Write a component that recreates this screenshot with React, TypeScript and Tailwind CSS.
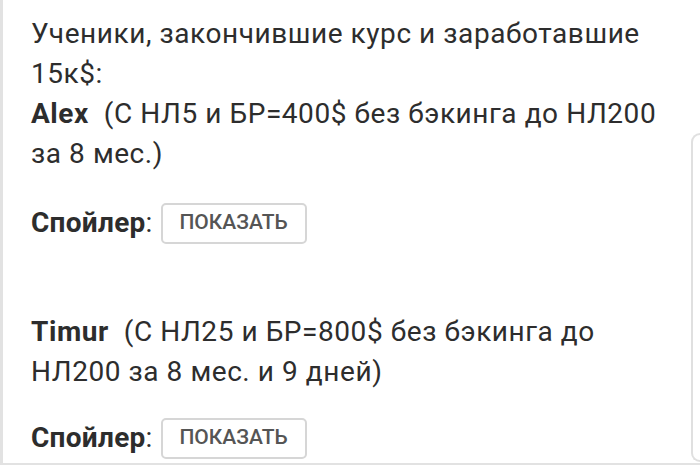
export default function App() {
  return (
    <div className="w-[700px] h-[465px] overflow-hidden bg-white border-l-[3px] border-b-[2px] border-[#e2e2e2] flex font-['Roboto',sans-serif] text-[#2d2d2d]">
      <div className="flex-1 pl-[28px] pr-[20px] pt-[14px]">
        <p className="text-[28px] leading-[40px] tracking-[0.02em]">
          Ученики, закончившие курс и заработавшие 15к$:
          <br />
          <b className="font-bold mr-[15px]">Alex</b>(С НЛ5 и БР=400$ без бэкинга до НЛ200 за 8 мес.)
        </p>

        <Spoiler className="mt-[28px]" />

        <p className="mt-[68px] text-[28px] leading-[40px] tracking-[0.02em]">
          <b className="font-bold mr-[15px]">Timur</b>(С НЛ25 и БР=800$ без бэкинга до НЛ200 за 8 мес. и 9 дней)
        </p>

        <Spoiler className="mt-[25px]" />
      </div>

      {/* edge of the next card */}
      <div className="w-[9px] mt-[133px] mb-[1px] border-2 border-r-0 border-[#e0e0e0] rounded-l-[10px]" />
    </div>
  )
}

function Spoiler({ className = "" }: { className?: string }) {
  return (
    <div className={`flex items-center text-[28px] tracking-[0.01em] ${className}`}>
      <span className="font-bold">Спойлер</span>
      <span>:</span>
      <button className="ml-[8px] h-[41px] w-[146px] rounded-[5px] border-2 border-[#d6d6d6] bg-white text-[21px] font-medium tracking-normal text-[#555]">
        ПОКАЗАТЬ
      </button>
    </div>
  )
}
